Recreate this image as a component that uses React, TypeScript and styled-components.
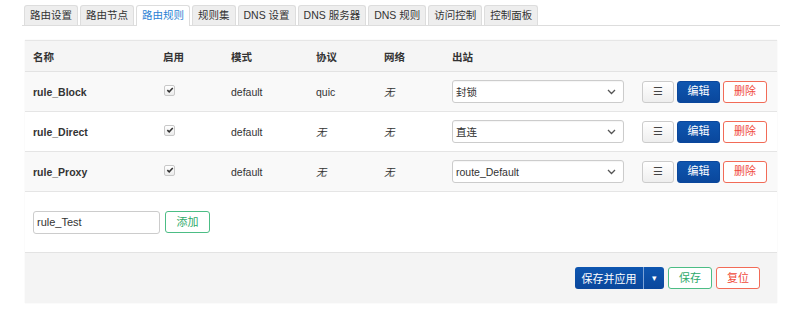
import React from 'react'
import styled, {createGlobalStyle} from 'styled-components'

const GlobalStyle = createGlobalStyle`
  html, body {
    margin: 0;
    padding: 0;
    background: #fff;
  }
  body {
    font-family: "Liberation Sans", Arial, "Noto Sans CJK SC", sans-serif;
    font-size: 10.5px;
    color: #333;
  }
`

const tabs = ['路由设置', '路由节点', '路由规则', '规则集', 'DNS 设置', 'DNS 服务器', 'DNS 规则', '访问控制', '控制面板']

const rules = [
  {name: 'rule_Block', proto: 'quic', out: '封锁'},
  {name: 'rule_Direct', proto: '', out: '直连'},
  {name: 'rule_Proxy', proto: '', out: 'route_Default'},
]

const Check = () => (
  <StyledCheck>
    <svg width="8" height="8" viewBox="0 0 9 9">
      <path d="M1.5 4.6 L3.6 6.6 L7.6 2.2" fill="none" stroke="#333" strokeWidth="1.7" />
    </svg>
  </StyledCheck>
)

const Chevron = () => (
  <svg width="9" height="6" viewBox="0 0 9 6">
    <path d="M1 1 L4.5 4.5 L8 1" fill="none" stroke="#555" strokeWidth="1.3" />
  </svg>
)

const App = () => {
  return (
    <StyledPage>
      <GlobalStyle />
      <StyledTabs>
        {tabs.map((t) => (
          <StyledTab key={t} active={t === '路由规则'}>{t}</StyledTab>
        ))}
      </StyledTabs>

      <StyledPanel>
        <StyledHeadRow>
          <StyledCell w={130}>名称</StyledCell>
          <StyledCell w={68}>启用</StyledCell>
          <StyledCell w={85}>模式</StyledCell>
          <StyledCell w={68}>协议</StyledCell>
          <StyledCell w={68}>网络</StyledCell>
          <StyledCell>出站</StyledCell>
        </StyledHeadRow>

        {rules.map((r, i) => (
          <StyledRow key={r.name} odd={i % 2 === 0}>
            <StyledCell w={130} bold>{r.name}</StyledCell>
            <StyledCell w={68}><Check /></StyledCell>
            <StyledCell w={85}>default</StyledCell>
            <StyledCell w={68}>{r.proto ? r.proto : <StyledNone>无</StyledNone>}</StyledCell>
            <StyledCell w={68}><StyledNone>无</StyledNone></StyledCell>
            <StyledCell w={190}>
              <StyledSelect>
                <span>{r.out}</span>
                <Chevron />
              </StyledSelect>
            </StyledCell>
            <StyledActions>
              <StyledButton kind="plain" w={32}>☰</StyledButton>
              <StyledButton kind="primary" w={43}>编辑</StyledButton>
              <StyledButton kind="danger" w={44}>删除</StyledButton>
            </StyledActions>
          </StyledRow>
        ))}

        <StyledAddRow>
          <StyledInput defaultValue="rule_Test" />
          <StyledButton kind="success" w={45}>添加</StyledButton>
        </StyledAddRow>

        <StyledFooter>
          <StyledSplit>
            <StyledSplitMain>保存并应用</StyledSplitMain>
            <StyledSplitArrow>▾</StyledSplitArrow>
          </StyledSplit>
          <StyledButton kind="success" w={44} h={22}>保存</StyledButton>
          <StyledButton kind="danger" w={44} h={22}>复位</StyledButton>
        </StyledFooter>
      </StyledPanel>
    </StyledPage>
  )
}

const StyledPage = styled.div`
  width: 800px;
  height: 320px;
  padding: 5px 0 0 22px;
  box-sizing: border-box;
`

const StyledTabs = styled.div`
  display: flex;
  align-items: flex-end;
  gap: 2px;
  width: 758px;
  border-bottom: 1px solid #ddd;
  padding-left: 2px;
  box-sizing: border-box;
`

const StyledTab = styled.div<{active?: boolean}>`
  padding: 0 5px;
  line-height: 19px;
  border: 1px solid #ddd;
  border-bottom: none;
  border-radius: 3px 3px 0 0;
  background: ${(p) => (p.active ? '#fff' : '#eee')};
  color: ${(p) => (p.active ? '#2a7fd4' : '#333')};
  margin-bottom: ${(p) => (p.active ? '-1px' : '0')};
  height: ${(p) => (p.active ? '20px' : '19px')};
`

const StyledPanel = styled.div`
  width: 752px;
  margin: 14px 0 0 3px;
  background: #fff;
  box-shadow: 0 0 1px rgba(0, 0, 0, 0.1);
`

const StyledHeadRow = styled.div`
  display: flex;
  align-items: center;
  height: 30px;
  padding-left: 8px;
  background: #f5f5f5;
  border-top: 1px solid #e6e6e6;
  border-bottom: 1px solid #e3e3e3;
  font-weight: bold;
  color: #333;
`

const StyledRow = styled.div<{odd?: boolean}>`
  display: flex;
  align-items: center;
  height: 39px;
  padding-left: 8px;
  background: ${(p) => (p.odd ? '#f9f9f9' : '#fff')};
  border-bottom: 1px solid #e5e5e5;
`

const StyledCell = styled.div<{w?: number; bold?: boolean}>`
  width: ${(p) => (p.w ? `${p.w}px` : 'auto')};
  flex: none;
  font-weight: ${(p) => (p.bold ? 'bold' : 'inherit')};
  display: flex;
  align-items: center;
`

const StyledNone = styled.span`
  font-style: italic;
  font-family: "Noto Sans CJK SC", sans-serif;
`

const StyledCheck = styled.span`
  width: 11px;
  height: 11px;
  box-sizing: border-box;
  border: 1px solid #c8c8c8;
  border-radius: 2px;
  background: linear-gradient(#fff, #ececec);
  display: flex;
  align-items: center;
  justify-content: center;
  margin: -3px 0 0 1px;
`

const StyledSelect = styled.div`
  width: 172px;
  height: 23px;
  box-sizing: border-box;
  border: 1px solid #ccc;
  border-radius: 3px;
  background: #fff;
  padding: 0 7px 0 3px;
  display: flex;
  align-items: center;
  justify-content: space-between;
  box-shadow: inset 0 1px 1px rgba(0, 0, 0, 0.04);
`

const StyledActions = styled.div`
  display: flex;
  gap: 3px;
`

const kinds = {
  plain: {bg: 'linear-gradient(#fff, #eee)', border: '#ccc', color: '#444'},
  primary: {bg: 'linear-gradient(#0e56b0, #0a479c)', border: '#0a479c', color: '#fff'},
  danger: {bg: '#fff', border: '#f26b57', color: '#f04a3a'},
  success: {bg: '#fff', border: '#4cbd85', color: '#2faa6a'},
}

const StyledButton = styled.button<{kind: keyof typeof kinds; w: number; h?: number}>`
  width: ${(p) => p.w}px;
  height: ${(p) => p.h || 22}px;
  box-sizing: border-box;
  padding: 0;
  border: 1px solid ${(p) => kinds[p.kind].border};
  border-radius: 3px;
  background: ${(p) => kinds[p.kind].bg};
  color: ${(p) => kinds[p.kind].color};
  font-family: inherit;
  font-size: 11px;
  line-height: 1;
`

const StyledAddRow = styled.div`
  display: flex;
  align-items: center;
  gap: 5px;
  height: 60px;
  padding: 0 0 0 8px;
  border-bottom: 1px solid #e3e3e3;
`

const StyledInput = styled.input`
  width: 127px;
  height: 23px;
  box-sizing: border-box;
  border: 1px solid #ccc;
  border-radius: 3px;
  padding: 0 3px;
  font-family: inherit;
  font-size: 11px;
  color: #333;
  outline: none;
`

const StyledFooter = styled.div`
  display: flex;
  justify-content: flex-end;
  align-items: center;
  gap: 4px;
  height: 50px;
  padding-right: 17px;
  background: #f4f4f4;
`

const StyledSplit = styled.div`
  display: flex;
  height: 22px;
  border-radius: 3px;
  overflow: hidden;
  background: linear-gradient(#0e56b0, #0a479c);
  color: #fff;
  font-size: 11px;
`

const StyledSplitMain = styled.div`
  width: 68px;
  display: flex;
  align-items: center;
  justify-content: center;
  border-right: 1px solid #7ba2d6;
`

const StyledSplitArrow = styled.div`
  width: 20px;
  display: flex;
  align-items: center;
  justify-content: center;
  font-size: 9px;
`

export default App
